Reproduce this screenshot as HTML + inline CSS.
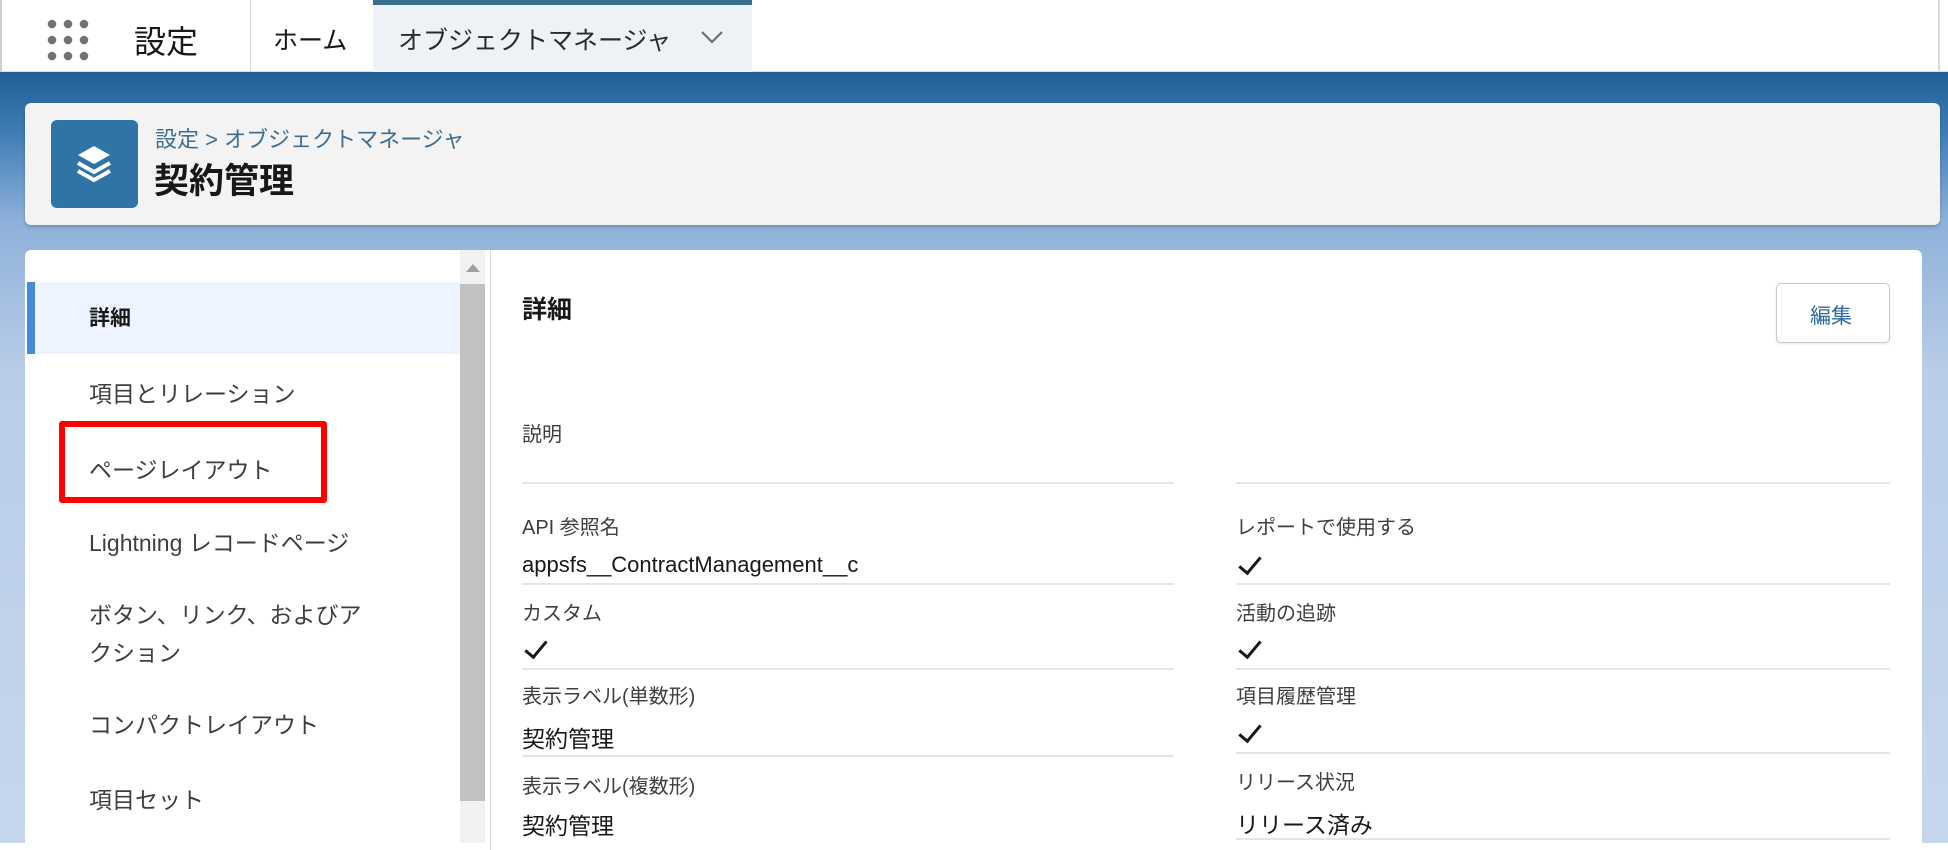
<!DOCTYPE html>
<html><head><meta charset="utf-8"><style>
*{margin:0;padding:0;box-sizing:border-box}
body{width:1948px;height:843px;overflow:hidden;position:relative;font-family:"Liberation Sans","Noto Sans CJK JP",sans-serif;color:#181818;background:#fff}
.a{position:absolute;white-space:nowrap}
.top{position:absolute;left:0;top:0;width:1948px;height:72px;background:#fff;border-bottom:1px solid #d8dde6;border-left:2px solid #cfcfcf}
.bg{position:absolute;left:0;top:72px;width:1948px;height:771px;background:linear-gradient(#1f5f95 0px,#3f7cb5 60px,#8fb1da 150px,#b8cde8 300px,#c6d6ec 771px)}
.card{position:absolute;left:25px;top:103px;width:1915px;height:122px;background:#f3f3f3;border-radius:6px;box-shadow:0 2px 3px rgba(0,0,0,.2)}
.lp{position:absolute;left:25px;top:250px;width:465px;height:600px;background:#fff;border-radius:6px 0 0 0}
.rp{position:absolute;left:490px;top:250px;width:1432px;height:600px;background:#fff;border-left:1px solid #dddbda;border-radius:0 6px 0 0}
.it{font-size:23px;color:#3e3e3c;left:89px}
.lb{font-size:20px;color:#3e3e3c}
.vl{font-size:23px;color:#181818}
.ln{position:absolute;height:2px;background:#e5e5e5}
.ck{position:absolute;width:12px;height:22px;border-right:3px solid #181818;border-bottom:3px solid #181818;transform:rotate(40deg)}
</style></head><body>
<div class="top"></div>
<svg class="a" style="left:46px;top:18px" width="44" height="44" viewBox="0 0 44 44" fill="#747474">
<circle cx="6" cy="6" r="4.3"/><circle cx="22" cy="6" r="4.3"/><circle cx="38" cy="6" r="4.3"/>
<circle cx="6" cy="22" r="4.3"/><circle cx="22" cy="22" r="4.3"/><circle cx="38" cy="22" r="4.3"/>
<circle cx="6" cy="38" r="4.3"/><circle cx="22" cy="38" r="4.3"/><circle cx="38" cy="38" r="4.3"/></svg>
<div class="a" style="left:134px;top:17px;font-size:32px;color:#181818">設定</div>
<div class="a" style="left:250px;top:0;width:1px;height:72px;background:#dddbda"></div>
<div class="a" style="left:273px;top:21px;font-size:25px">ホーム</div>
<div class="a" style="left:373px;top:0;width:379px;height:72px;background:#eef1f6;border-top:5px solid #3b6e8f"></div>
<div class="a" style="left:398px;top:21px;font-size:25px;color:#2b2b2b">オブジェクトマネージャ</div>
<svg class="a" style="left:700px;top:30px" width="24" height="14" viewBox="0 0 24 14"><path d="M2 2 L12 12 L22 2" stroke="#706e6b" stroke-width="2.2" fill="none"/></svg>
<div class="a" style="left:1938px;top:0;width:2px;height:72px;background:#dddbda"></div>
<div class="bg"></div>
<div class="card"></div>
<div class="a" style="left:51px;top:120px;width:87px;height:88px;background:#2f74a6;border-radius:6px"></div>
<svg class="a" style="left:72px;top:142px" width="44" height="44" viewBox="0 0 44 44"><path d="M22 4 L38 13 L22 22 L6 13Z" fill="#fff"/><path d="M6 21 L22 30 L38 21" stroke="#fff" stroke-width="4" fill="none"/><path d="M6 29 L22 38 L38 29" stroke="#fff" stroke-width="4" fill="none"/></svg>
<div class="a" style="left:155px;top:122px;font-size:22px;color:#3e6e92">設定 &gt; オブジェクトマネージャ</div>
<div class="a" style="left:154px;top:153px;font-size:35px;font-weight:bold;color:#181818">契約管理</div>
<div class="lp"></div>
<div class="a" style="left:27px;top:282px;width:433px;height:72px;background:#eef4ff"></div>
<div class="a" style="left:27px;top:282px;width:8px;height:72px;background:#1b6ecf;opacity:.8"></div>
<div class="a it" style="top:302px;font-weight:bold;font-size:21px;color:#181818">詳細</div>
<div class="a it" style="top:375px">項目とリレーション</div>
<div class="a it" style="top:451px">ページレイアウト</div>
<div class="a" style="left:59px;top:421px;width:268px;height:82px;border:6px solid #ff0000;border-radius:3px"></div>
<div class="a it" style="top:524px">Lightning レコードページ</div>
<div class="a it" style="top:596px">ボタン、リンク、およびア</div>
<div class="a it" style="top:634px">クション</div>
<div class="a it" style="top:706px">コンパクトレイアウト</div>
<div class="a it" style="top:781px">項目セット</div>
<div class="a" style="left:460px;top:250px;width:25px;height:593px;background:#f1f1f1"></div>
<svg class="a" style="left:466px;top:264px" width="14" height="8"><path d="M0 8 L7 0 L14 8Z" fill="#a0a0a0"/></svg>
<div class="a" style="left:460px;top:284px;width:25px;height:517px;background:#c1c1c1"></div>
<div class="rp"></div>
<div class="a" style="left:522px;top:290px;font-size:25px;font-weight:bold">詳細</div>
<div class="a" style="left:1776px;top:283px;width:114px;height:60px;border:1px solid #c9c9c9;border-radius:5px;background:#fff;box-shadow:0 1px 2px rgba(0,0,0,.1)"></div>
<div class="a" style="left:1810px;top:300px;font-size:21px;color:#2e6a9e">編集</div>
<div class="a lb" style="left:522px;top:418px">説明</div>
<div class="ln" style="left:522px;top:482px;width:652px"></div>
<div class="ln" style="left:1236px;top:482px;width:654px"></div>
<div class="a lb" style="left:522px;top:511px">API 参照名</div>
<div class="a vl" style="left:522px;top:552px;font-size:22px">appsfs__ContractManagement__c</div>
<div class="ln" style="left:522px;top:583px;width:652px"></div>
<div class="a lb" style="left:522px;top:597px">カスタム</div>
<div class="ck" style="left:530px;top:636px"></div>
<div class="ln" style="left:522px;top:668px;width:652px"></div>
<div class="a lb" style="left:522px;top:680px">表示ラベル(単数形)</div>
<div class="a vl" style="left:522px;top:720px">契約管理</div>
<div class="ln" style="left:522px;top:755px;width:652px"></div>
<div class="a lb" style="left:522px;top:770px">表示ラベル(複数形)</div>
<div class="a vl" style="left:522px;top:807px">契約管理</div>
<div class="a lb" style="left:1236px;top:511px">レポートで使用する</div>
<div class="ck" style="left:1244px;top:552px"></div>
<div class="ln" style="left:1236px;top:583px;width:654px"></div>
<div class="a lb" style="left:1236px;top:597px">活動の追跡</div>
<div class="ck" style="left:1244px;top:636px"></div>
<div class="ln" style="left:1236px;top:668px;width:654px"></div>
<div class="a lb" style="left:1236px;top:680px">項目履歴管理</div>
<div class="ck" style="left:1244px;top:720px"></div>
<div class="ln" style="left:1236px;top:752px;width:654px"></div>
<div class="a lb" style="left:1236px;top:766px">リリース状況</div>
<div class="a vl" style="left:1236px;top:806px">リリース済み</div>
<div class="ln" style="left:1236px;top:838px;width:654px"></div>
</body></html>
